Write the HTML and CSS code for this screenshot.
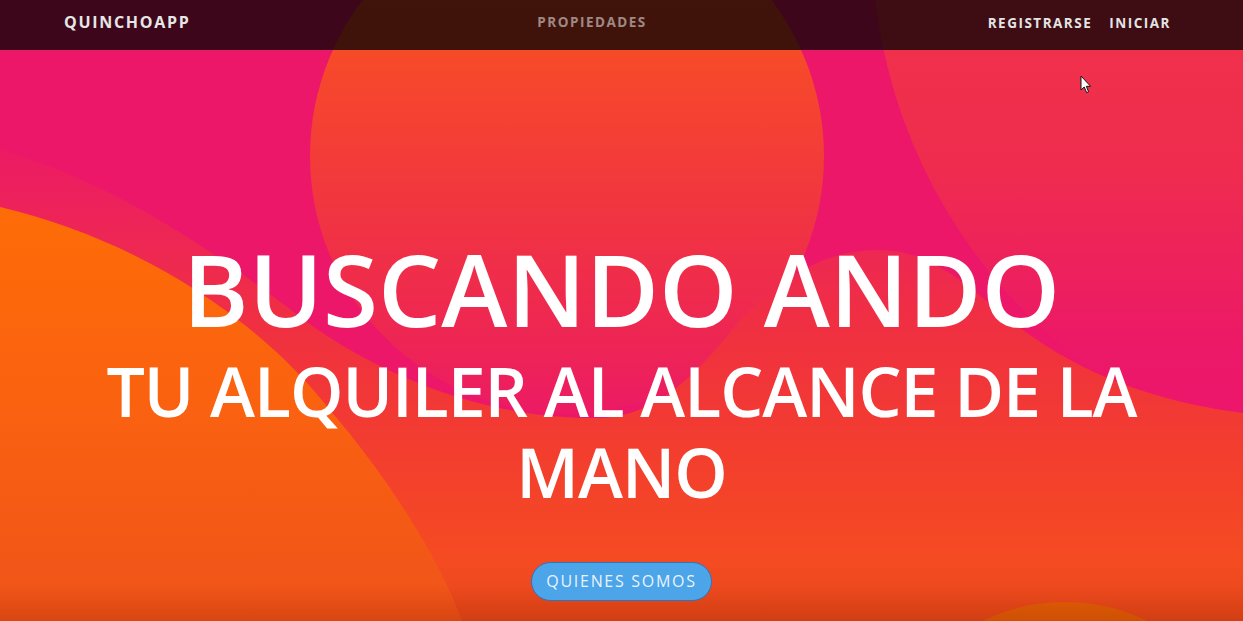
FILE: index.html
```html
<!DOCTYPE html>
<html lang="es">
<head>
<meta charset="utf-8">
<title>QuinchoApp</title>
<link rel="stylesheet" href="styles.css">
</head>
<body>
<header class="hero">
  <svg class="hero-bg" viewBox="0 0 1243 621" preserveAspectRatio="none" aria-hidden="true">
    <defs>
      <linearGradient id="gRight" x1="0" y1="0" x2="0" y2="470" gradientUnits="userSpaceOnUse">
        <stop offset="0" stop-color="#f0324a"/>
        <stop offset="0.35" stop-color="#ef2c4e"/>
        <stop offset="0.75" stop-color="#ec1868"/>
        <stop offset="1" stop-color="#ec146e"/>
      </linearGradient>
      <linearGradient id="gCircle" x1="0" y1="-100" x2="0" y2="412" gradientUnits="userSpaceOnUse">
        <stop offset="0" stop-color="#f95224"/>
        <stop offset="0.3" stop-color="#f74a29"/>
        <stop offset="0.6" stop-color="#f13540"/>
        <stop offset="0.85" stop-color="#ee2653"/>
        <stop offset="1" stop-color="#ec1b64"/>
      </linearGradient>
      <linearGradient id="gWave" x1="0" y1="150" x2="0" y2="621" gradientUnits="userSpaceOnUse">
        <stop offset="0" stop-color="#ec1b64"/>
        <stop offset="0.22" stop-color="#ee2852"/>
        <stop offset="0.4" stop-color="#f0313f"/>
        <stop offset="0.65" stop-color="#f33e2e"/>
        <stop offset="0.87" stop-color="#f54b22"/>
        <stop offset="1" stop-color="#e6481a"/>
      </linearGradient>
      <linearGradient id="gOrange" x1="0" y1="200" x2="0" y2="621" gradientUnits="userSpaceOnUse">
        <stop offset="0" stop-color="#fe6c07"/>
        <stop offset="0.5" stop-color="#fa6110"/>
        <stop offset="1" stop-color="#f0531a"/>
      </linearGradient>
      <linearGradient id="gShade" x1="0" y1="585" x2="0" y2="621" gradientUnits="userSpaceOnUse">
        <stop offset="0" stop-color="#a02800" stop-opacity="0"/>
        <stop offset="1" stop-color="#a02800" stop-opacity="0.3"/>
      </linearGradient>
    </defs>
    <rect x="0" y="0" width="1243" height="621" fill="#ec1769"/>
    <circle cx="1400" cy="-60" r="528" fill="url(#gRight)"/>
    <circle cx="567" cy="156" r="257" fill="url(#gCircle)"/>
    <path d="M0,150 C140,190 250,280 318,330 C400,385 500,420 600,418 C660,416 700,370 740,320 C790,270 830,250 880,250 C940,250 980,300 1030,335 C1100,385 1180,405 1243,413 L1243,621 L0,621 Z" fill="url(#gWave)"/>
    <path d="M0,207 C140,240 260,320 330,410 C390,480 440,560 462,621 L0,621 Z" fill="url(#gOrange)"/>
    <circle cx="1065" cy="790" r="188" fill="#e36006"/>
    <rect x="0" y="585" width="1243" height="36" fill="url(#gShade)"/>
  </svg>

  <nav class="navbar">
    <a class="brand" href="#">QUINCHOAPP</a>
    <a class="nav-link muted" href="#">PROPIEDADES</a>
    <div class="nav-right">
      <a class="nav-link" href="#">REGISTRARSE</a>
      <a class="nav-link" href="#">INICIAR</a>
    </div>
  </nav>

  <div class="hero-content">
    <h1 class="title">BUSCANDO ANDO</h1>
    <h2 class="subtitle">TU ALQUILER AL ALCANCE DE LA MANO</h2>
    <a class="btn-pill" href="#">QUIENES SOMOS</a>
  </div>

  <svg class="cursor" width="12" height="19" viewBox="0 0 12 19" aria-hidden="true">
    <path d="M1,1 L1,15 L4.2,12 L6.6,17.6 L8.6,16.8 L6.3,11.3 L10.6,11.3 Z" fill="#fff" stroke="#111" stroke-width="1"/>
  </svg>
</header>
</body>
</html>
```

FILE: styles.css
```css
* {
  box-sizing: border-box;
}

html,
body {
  margin: 0;
  padding: 0;
}

body {
  font-family: "Open Sans", "Noto Sans", sans-serif;
  background: #ec1769;
  overflow: hidden;
}

a {
  text-decoration: none;
}

.hero {
  position: relative;
  height: 621px;
  overflow: hidden;
}

.hero-bg {
  position: absolute;
  left: 0;
  top: 0;
  width: 100%;
  height: 100%;
  display: block;
}

.navbar {
  position: absolute;
  top: 0;
  left: 0;
  right: 0;
  height: 50px;
  padding: 0 72px 0 64px;
  display: flex;
  align-items: center;
  justify-content: space-between;
  background: rgba(0, 0, 0, 0.74);
  z-index: 2;
}

.brand {
  color: #e6e6e6;
  font-weight: 700;
  font-size: 16px;
  letter-spacing: 1.7px;
  margin-top: -6px;
}

.nav-link {
  color: #e4e4e4;
  font-weight: 700;
  font-size: 13.5px;
  letter-spacing: 1.5px;
  margin-top: -5px;
}

.nav-link.muted {
  color: rgba(255, 255, 255, 0.5);
  margin-top: -7px;
  margin-left: 6px;
}

.nav-right {
  display: flex;
  gap: 17px;
}

.hero-content {
  position: relative;
  z-index: 1;
  max-width: 1110px;
  margin: 0 auto;
  padding-top: 228px;
  text-align: center;
  color: #fff;
}

.title {
  margin: 0;
  font-size: 100px;
  line-height: 120px;
  font-weight: 600;
  letter-spacing: 0;
}

.subtitle {
  margin: 2px 0 0;
  font-size: 68px;
  line-height: 81px;
  font-weight: 600;
  letter-spacing: -1px;
}

.btn-pill {
  display: inline-block;
  margin-top: 50px;
  width: 181px;
  height: 39px;
  line-height: 37px;
  border: 1px solid #2f73b8;
  border-radius: 20px;
  background: #4ca4e9;
  color: #eaf3fb;
  font-size: 16px;
  letter-spacing: 1.7px;
}

.cursor {
  position: absolute;
  left: 1080px;
  top: 75px;
  z-index: 3;
}
```
